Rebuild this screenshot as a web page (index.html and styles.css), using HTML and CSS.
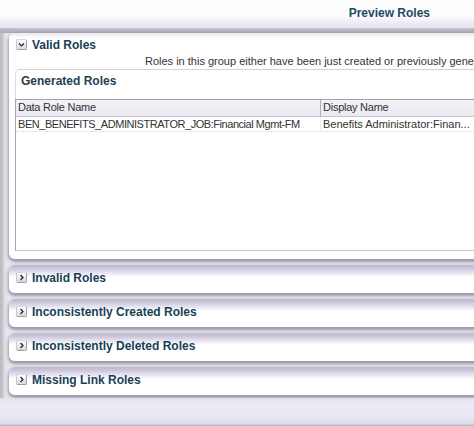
FILE: index.html
```html
<!DOCTYPE html>
<html>
<head>
<meta charset="utf-8">
<link rel="stylesheet" href="styles.css">
</head>
<body>
<div class="page">
  <div class="topbar"><span class="page-title">Preview Roles</span></div>
  <div class="topband"></div>
  <div class="panels">
    <section class="panel panel-open">
      <div class="panel-head">
        <span class="toggle"><svg width="11" height="11" viewBox="0 0 11 11"><polyline points="3,4.5 5.5,7 8,4.5" fill="none" stroke="#222" stroke-width="1.2"/></svg></span>
        <span class="panel-title">Valid Roles</span>
      </div>
      <div class="desc">Roles in this group either have been just created or previously gener</div>
      <div class="box">
        <div class="box-title">Generated Roles</div>
        <div class="table">
          <div class="row head">
            <div class="cell c1">Data Role Name</div>
            <div class="cell c2">Display Name</div>
          </div>
          <div class="row data">
            <div class="cell c1 tight">BEN_BENEFITS_ADMINISTRATOR_JOB:Financial Mgmt-FM</div>
            <div class="cell c2">Benefits Administrator:Finan...</div>
          </div>
        </div>
      </div>
    </section>
    <section class="panel">
      <div class="panel-head">
        <span class="toggle"><svg width="11" height="11" viewBox="0 0 11 11"><polyline points="4.5,3 7,5.5 4.5,8" fill="none" stroke="#222" stroke-width="1.2"/></svg></span>
        <span class="panel-title">Invalid Roles</span>
      </div>
    </section>
    <section class="panel">
      <div class="panel-head">
        <span class="toggle"><svg width="11" height="11" viewBox="0 0 11 11"><polyline points="4.5,3 7,5.5 4.5,8" fill="none" stroke="#222" stroke-width="1.2"/></svg></span>
        <span class="panel-title">Inconsistently Created Roles</span>
      </div>
    </section>
    <section class="panel">
      <div class="panel-head">
        <span class="toggle"><svg width="11" height="11" viewBox="0 0 11 11"><polyline points="4.5,3 7,5.5 4.5,8" fill="none" stroke="#222" stroke-width="1.2"/></svg></span>
        <span class="panel-title">Inconsistently Deleted Roles</span>
      </div>
    </section>
    <section class="panel">
      <div class="panel-head">
        <span class="toggle"><svg width="11" height="11" viewBox="0 0 11 11"><polyline points="4.5,3 7,5.5 4.5,8" fill="none" stroke="#222" stroke-width="1.2"/></svg></span>
        <span class="panel-title">Missing Link Roles</span>
      </div>
    </section>
  </div>
  <div class="footer"></div>
</div>
</body>
</html>
```
FILE: styles.css
```css
html, body {
  margin: 0;
  padding: 0;
}
body {
  width: 474px;
  height: 426px;
  overflow: hidden;
  font-family: "Liberation Sans", Arial, sans-serif;
  font-size: 11px;
  color: #333;
  background: linear-gradient(to right, #b9b9bb 0, #c9c9cb 3px, #dcdae2 4px, #e9e6f1 7px);
}
.page {
  display: flex;
  flex-direction: column;
  height: 426px;
}
.topbar {
  height: 28px;
  display: flex;
  justify-content: flex-end;
  align-items: flex-start;
  padding-right: 44px;
  background: linear-gradient(#ffffff 0, #fcfbfd 17px, #efecf5 22px, #e8e4f1 28px);
}
.page-title {
  font-weight: bold;
  font-size: 12px;
  color: #1d4a62;
  padding-top: 6px;
  line-height: 14px;
}
.topband {
  height: 5px;
  background: linear-gradient(#c4c2cc, #a9a9b3);
}
.panels {
  display: flex;
  flex-direction: column;
  gap: 6px;
  padding-left: 9px;
}
.panel {
  margin-right: -30px;
  border-radius: 6px;
  background: linear-gradient(#bfbacb 0, #cbc3d9 3px, #ddd8e8 6px, #eeebf5 9px, #ffffff 12px);
  box-shadow: 0 2px 3px 1px rgba(112, 112, 128, 0.65);
  height: 28px;
  box-sizing: border-box;
}
.panel-open {
  height: 226px;
  background: linear-gradient(#ebe8f1 0, #ffffff 5px);
}
.panel-head {
  display: flex;
  align-items: center;
  gap: 5px;
  padding: 7px 0 0 7px;
  height: 11px;
}
.panel-open .panel-head {
  padding-top: 6px;
  height: 11px;
}
.toggle {
  width: 11px;
  height: 11px;
  box-sizing: border-box;
  display: flex;
  border: 1px solid #9e9ea6;
  border-top-color: #d6d6dc;
  border-left-color: #c8c8d0;
  border-radius: 2px;
  background: linear-gradient(#ffffff, #d8d8e0);
}
.toggle svg {
  margin: -1px;
}
.panel-title {
  font-weight: bold;
  font-size: 12px;
  line-height: 12px;
  color: #173f57;
}
.desc {
  margin-top: 5px;
  padding-left: 136px;
  white-space: nowrap;
  line-height: 13px;
  height: 14px;
  color: #333;
}
.box {
  margin-left: 6px;
  border-top: 1px solid #d2d2d6;
  border-left: 1px solid #dcdce0;
  border-top-left-radius: 5px;
  height: 181px;
  display: flex;
  flex-direction: column;
}
.box-title {
  font-weight: bold;
  font-size: 12px;
  color: #26404f;
  line-height: 14px;
  padding: 4px 0 0 5px;
  height: 25px;
}
.table {
  flex: 1;
  margin-left: -1px;
  border-top: 1px solid #a3a3a8;
  border-left: 1px solid #a8a8ac;
  border-bottom: 1px solid #cdc2c2;
}
.row {
  display: flex;
  white-space: nowrap;
}
.row.head {
  height: 16px;
  background: linear-gradient(#f4f2f8, #ebe8f1);
  border-bottom: 1px solid #c6c6ca;
}
.row.head .cell {
  letter-spacing: -0.25px;
}
.row.data {
  height: 14px;
  border-bottom: 1px dotted #d4d4d8;
}
.cell {
  flex-shrink: 0;
  padding-left: 2px;
  line-height: 15px;
  overflow: hidden;
}
.row.data .cell {
  line-height: 14px;
}
.tight {
  letter-spacing: -0.45px;
}
.c1 {
  width: 302px;
  border-right: 1px solid #b0b0b4;
}
.row.data .c1 {
  border-right-color: #ececee;
}
.c2 {
  width: 160px;
}
.footer {
  flex: 1;
  margin-top: 3px;
  background: linear-gradient(#e2deea 0, #ece8f4 6px, #ebe7f3 18px, #dde0ed 24px, #d8dcea 26px, #aaaab2 28px);
}
```
